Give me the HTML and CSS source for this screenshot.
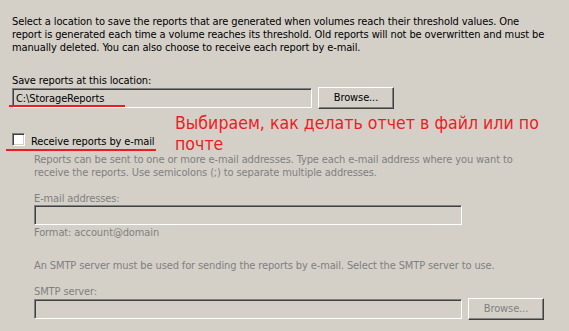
FILE: index.html
```html
<!DOCTYPE html>
<html>
<head>
<meta charset="utf-8">
<link rel="stylesheet" href="styles.css">
</head>
<body>
<div class="page">
  <p class="intro">Select a location to save the reports that are generated when volumes reach their threshold values. One<br>report is generated each time a volume reaches its threshold. Old reports will not be overwritten and must be<br>manually deleted. You can also choose to receive each report by e-mail.</p>

  <div class="label loc-label">Save reports at this location:</div>
  <div class="row">
    <div class="field field-path">C:\StorageReports</div>
    <div class="btn">Browse...</div>
  </div>

  <div class="check-row">
    <span class="checkbox"></span>
    <span class="check-text">Receive reports by e-mail</span>
  </div>

  <div class="disabled">
    <p class="note">Reports can be sent to one or more e-mail addresses. Type each e-mail address where you want to<br>receive the reports. Use semicolons (;) to separate multiple addresses.</p>
    <div class="label email-label">E-mail addresses:</div>
    <div class="field field-wide"></div>
    <div class="format">Format: account@domain</div>
    <p class="smtp-note">An SMTP server must be used for sending the reports by e-mail. Select the SMTP server to use.</p>
    <div class="label smtp-label">SMTP server:</div>
    <div class="row">
      <div class="field field-wide"></div>
      <div class="btn btn-disabled">Browse...</div>
    </div>
  </div>

  <div class="annot annot-text">Выбираем, как делать отчет в файл или по<br>почте</div>
  <div class="annot line line-path"></div>
  <div class="annot line line-check"></div>
</div>
</body>
</html>
```

FILE: styles.css
```css
html, body {
  margin: 0;
  padding: 0;
}
body {
  background: #d4d0c8;
  width: 569px;
  height: 331px;
  overflow: hidden;
  font-family: "DejaVu Sans Condensed", "DejaVu Sans", sans-serif;
  font-size: 11px;
  line-height: 13px;
  letter-spacing: -0.12px;
  color: #000;
}
.page {
  position: relative;
  height: 331px;
  padding: 15px 0 0 12px;
  box-sizing: border-box;
}
.intro {
  margin: 0;
  white-space: nowrap;
}
.label {
  white-space: nowrap;
}
.loc-label {
  margin-top: 20px;
}
.row {
  display: flex;
  align-items: center;
  gap: 6px;
  height: 22px;
}
.field {
  box-sizing: border-box;
  height: 20px;
  border: 1px solid;
  border-color: #808080 #fff #fff #808080;
  box-shadow: inset 1px 1px 0 #404040, inset -1px -1px 0 #d4d0c8;
  padding: 3px 0 0 3px;
  line-height: 13px;
  white-space: nowrap;
}
.field-path {
  width: 300px;
}
.field-wide {
  width: 428px;
}
.btn {
  box-sizing: border-box;
  width: 76px;
  height: 22px;
  border: 1px solid;
  border-color: #fff #404040 #404040 #fff;
  box-shadow: inset -1px -1px 0 #808080;
  text-align: center;
  line-height: 19px;
}
.btn-disabled {
  color: #808080;
}
.check-row {
  display: flex;
  align-items: center;
  gap: 6px;
  margin-top: 24px;
  height: 13px;
}
.checkbox {
  box-sizing: border-box;
  width: 13px;
  height: 13px;
  background: #fff;
  border: 1px solid;
  border-color: #808080 #fff #fff #808080;
  box-shadow: inset 1px 1px 0 #404040, inset -1px -1px 0 #d4d0c8;
}
.check-text {
  position: relative;
  top: 2px;
}
.disabled {
  padding-left: 22px;
  color: #808080;
}
.note {
  margin: 7px 0 0;
  white-space: nowrap;
}
.email-label {
  margin-top: 13px;
}
.format {
  margin-top: 1px;
}
.smtp-note {
  margin: 20px 0 0;
  white-space: nowrap;
}
.smtp-label {
  margin-top: 13px;
}
.annot {
  position: absolute;
}
.annot-text {
  left: 175px;
  top: 113px;
  color: #ed1c24;
  font-size: 17.6px;
  line-height: 21px;
  letter-spacing: 0;
  white-space: nowrap;
}
.line {
  height: 2px;
  background: #ed1c24;
}
.line-path {
  left: 9px;
  top: 105px;
  width: 116px;
}
.line-check {
  left: 6px;
  top: 149px;
  width: 150px;
}
```
